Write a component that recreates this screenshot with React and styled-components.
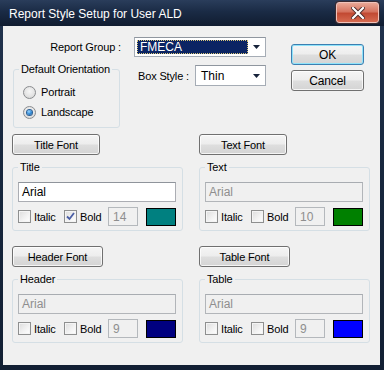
import React from 'react';
import styled, { createGlobalStyle } from 'styled-components';

const Global = createGlobalStyle`
  html, body { margin: 0; padding: 0; background: #ffffff; }
  body {
    width: 384px; height: 370px; overflow: hidden;
    font-family: "Liberation Sans", Arial, sans-serif;
    font-size: 11px; color: #000;
    letter-spacing: -0.15px;
  }
  * { box-sizing: border-box; }
`;

const Window = styled.div`
  width: 384px;
  height: 370px;
  display: flex;
  flex-direction: column;
  background: linear-gradient(180deg, #22344f 0%, #18283f 40%, #121f33 100%);
`;

const TitleBar = styled.div`
  height: 26px;
  flex: none;
  display: flex;
  align-items: flex-start;
  padding-left: 9px;
  background: linear-gradient(180deg, #2a3d5b 0%, #1a2b45 45%, #101c30 100%);
`;

const TitleText = styled.div`
  font-size: 12px;
  color: #ffffff;
  line-height: 14px;
  margin-top: 7px;
  letter-spacing: 0;
`;

const CloseButton = styled.div`
  margin-left: auto;
  margin-right: 5px;
  margin-top: 2px;
  width: 43px;
  height: 21px;
  border-radius: 3px;
  border: 1px solid #efc3bb;
  box-shadow: 0 0 0 1px #3b2a30;
  background: linear-gradient(180deg, #e9a796 0%, #d57460 45%, #c24a33 55%, #d66a50 100%);
  display: flex;
  align-items: center;
  justify-content: center;
`;

const Client = styled.div`
  flex: 1;
  margin: 0 4px 5px 3px;
  background: #f0f0f0;
  padding: 11px 0 0 9px;
  display: flex;
  flex-direction: column;
`;

const TopSection = styled.div`
  display: flex;
`;

const TopLeft = styled.div`
  width: 279px;
  display: flex;
  flex-direction: column;
`;

const FieldRow = styled.div`
  display: flex;
  align-items: center;
  height: 20px;
`;

const RightLabel = styled.div`
  width: ${p => p.$w}px;
  text-align: ${p => p.$align || 'left'};
  margin-left: ${p => p.$ml || 0}px;
  white-space: nowrap;
`;

const Select = styled.div`
  width: ${p => p.$w}px;
  height: ${p => p.$h || 20}px;
  margin-left: ${p => p.$ml || 0}px;
  border: 1px solid #a5acb5;
  border-top-color: #8f969f;
  background: #ffffff;
  display: flex;
  padding: 2px 1px 2px 2px;
`;

const SelectValue = styled.div`
  flex: 1;
  display: flex;
  align-items: center;
  padding-left: 2px;
  font-size: 12px;
  letter-spacing: 0;
  background: ${p => (p.$selected ? '#0b2463' : 'transparent')};
  color: ${p => (p.$selected ? '#ffffff' : '#000000')};
  border: 1px dotted ${p => (p.$selected ? '#d9c77a' : 'transparent')};
`;

const SelectArrow = styled.div`
  width: 16px;
  display: flex;
  align-items: center;
  justify-content: center;
`;

const SecondRow = styled.div`
  display: flex;
  margin-top: 6px;
`;

const BoxStyleRow = styled.div`
  display: flex;
  align-items: center;
  height: 21px;
  margin-top: 2px;
`;

const GroupBox = styled.fieldset`
  margin: 0 0 0 ${p => p.$ml || 0}px;
  width: ${p => p.$w}px;
  border: 1px solid #d5dfe5;
  border-radius: 3px;
  padding: 0 4px ${p => p.$pb || 4}px 5px;
  min-width: 0;
`;

const Legend = styled.legend`
  padding: 0 2px;
  font-size: 11px;
  line-height: 13px;
  white-space: nowrap;
`;

const RadioRow = styled.label`
  display: flex;
  align-items: center;
  height: 20px;
  margin-left: 4px;
  margin-top: ${p => p.$mt || 0}px;
  gap: 5px;
  font-size: 11px;
`;

const Radio = styled.span`
  width: 13px;
  height: 13px;
  border-radius: 50%;
  border: 1px solid #8a8c8f;
  background: radial-gradient(circle at 50% 40%, #f6f6f6 0%, #e4e4e4 55%, #cfcfcf 100%);
  display: flex;
  align-items: center;
  justify-content: center;
  &::after {
    content: '';
    width: 5px;
    height: 5px;
    border-radius: 50%;
    display: ${p => (p.$checked ? 'block' : 'none')};
    background: radial-gradient(circle at 40% 35%, #9fd8ff 0%, #2f8ad8 50%, #14508c 100%);
    box-shadow: 0 0 0 1px #2b5f95;
  }
`;

const ButtonColumn = styled.div`
  display: flex;
  flex-direction: column;
  gap: 5px;
  margin-top: 7px;
`;

const Button = styled.div`
  width: ${p => p.$w}px;
  height: 21px;
  border: 1px solid ${p => (p.$default ? '#3c7fb1' : '#707070')};
  border-radius: 3px;
  background: linear-gradient(180deg, #f5f5f5 0%, #ededed 48%, #dedede 52%, #d4d4d4 100%);
  box-shadow: inset 0 0 0 1px ${p => (p.$default ? '#8fe3fa' : 'rgba(255,255,255,0.75)')};
  display: flex;
  align-items: center;
  justify-content: center;
  font-size: ${p => p.$fs || 11}px;
  color: #000;
`;

const FontGrid = styled.div`
  display: grid;
  grid-template-columns: 171px 171px;
  column-gap: 16px;
  row-gap: 15px;
  margin-top: 6px;
`;

const FontBlock = styled.div`
  display: flex;
  flex-direction: column;
  align-items: flex-start;
`;

const FontGroup = styled(GroupBox)`
  margin-top: 6px;
  width: 171px;
  padding-right: 6px;
`;

const FontInput = styled.div`
  width: 158px;
  height: 20px;
  margin-top: 8px;
  border: 1px solid ${p => (p.$disabled ? '#b2b5b9' : '#abadb3')};
  border-top-color: ${p => (p.$disabled ? '#a8acb1' : '#8f949b')};
  background: ${p => (p.$disabled ? '#f0f0f0' : '#ffffff')};
  color: ${p => (p.$disabled ? '#8e8e8e' : '#000000')};
  font-size: 12px;
  letter-spacing: 0;
  display: flex;
  align-items: center;
  padding-left: 3px;
`;

const OptionRow = styled.div`
  display: flex;
  align-items: center;
  height: 19px;
  margin-top: 5px;
`;

const CheckItem = styled.label`
  width: ${p => p.$w}px;
  display: flex;
  align-items: center;
  gap: 3px;
  font-size: 11px;
`;

const CheckBox = styled.span`
  width: 13px;
  height: 13px;
  border: 1px solid #8e8f8f;
  background: linear-gradient(135deg, #dcdcdc 0%, #f3f3f3 60%, #ffffff 100%);
  box-shadow: inset 0 0 0 1px #f4f4f4;
  display: flex;
  align-items: center;
  justify-content: center;
`;

const SizeBox = styled.div`
  width: 30px;
  height: 19px;
  border: 1px solid #b4b8bc;
  background: #f0f0f0;
  color: #8e8e8e;
  font-size: 12px;
  letter-spacing: 0;
  display: flex;
  align-items: center;
  padding-left: 4px;
  margin-right: 8px;
`;

const Swatch = styled.div`
  width: 30px;
  height: 18px;
  border: 1px solid #000;
  background: ${p => p.$color};
`;

const Arrow = () => (
  <svg width="7" height="4" viewBox="0 0 7 4">
    <path d="M0 0 H7 L3.5 4 Z" fill="#16223a" />
  </svg>
);

const CheckMark = () => (
  <svg width="9" height="9" viewBox="0 0 9 9">
    <path d="M1 4.5 L3.5 7 L8 1" stroke="#4a5ea5" strokeWidth="1.8" fill="none" />
  </svg>
);

const CloseX = () => (
  <svg width="14" height="12" viewBox="0 0 14 12">
    <path d="M2 1 L12 11 M12 1 L2 11" stroke="#4a2a2a" strokeWidth="4" strokeLinecap="square" />
    <path d="M2 1 L12 11 M12 1 L2 11" stroke="#ffffff" strokeWidth="2.2" strokeLinecap="square" />
  </svg>
);

const fontSets = [
  { button: 'Title Font', bw: 88, legend: 'Title', disabled: false, bold: true, size: '14', color: '#008080' },
  { button: 'Text Font', bw: 88, legend: 'Text', disabled: true, bold: false, size: '10', color: '#008000' },
  { button: 'Header Font', bw: 91, legend: 'Header', disabled: true, bold: false, size: '9', color: '#000080' },
  { button: 'Table Font', bw: 91, legend: 'Table', disabled: true, bold: false, size: '9', color: '#0000ff' },
];

export default function App() {
  return (
    <>
      <Global />
      <Window>
        <TitleBar>
          <TitleText>Report Style Setup for User ALD</TitleText>
          <CloseButton><CloseX /></CloseButton>
        </TitleBar>
        <Client>
          <TopSection>
            <TopLeft>
              <FieldRow>
                <RightLabel $w={109} $align="right">Report Group :</RightLabel>
                <Select $w={132} $ml={13}>
                  <SelectValue $selected>FMECA</SelectValue>
                  <SelectArrow><Arrow /></SelectArrow>
                </Select>
              </FieldRow>
              <SecondRow>
                <GroupBox $w={107} $ml={1} $pb={5}>
                  <Legend>Default Orientation</Legend>
                  <RadioRow $mt={6}><Radio />Portrait</RadioRow>
                  <RadioRow><Radio $checked />Landscape</RadioRow>
                </GroupBox>
                <BoxStyleRow>
                  <RightLabel $w={57} $ml={18}>Box Style :</RightLabel>
                  <Select $w={71} $h={21}>
                    <SelectValue>Thin</SelectValue>
                    <SelectArrow><Arrow /></SelectArrow>
                  </Select>
                </BoxStyleRow>
              </SecondRow>
            </TopLeft>
            <ButtonColumn>
              <Button $w={73} $default $fs={12}>OK</Button>
              <Button $w={73} $fs={12}>Cancel</Button>
            </ButtonColumn>
          </TopSection>
          <FontGrid>
            {fontSets.map(f => (
              <FontBlock key={f.legend}>
                <Button $w={f.bw}>{f.button}</Button>
                <FontGroup>
                  <Legend>{f.legend}</Legend>
                  <FontInput $disabled={f.disabled}>Arial</FontInput>
                  <OptionRow>
                    <CheckItem $w={46}><CheckBox />Italic</CheckItem>
                    <CheckItem $w={44}><CheckBox>{f.bold && <CheckMark />}</CheckBox>Bold</CheckItem>
                    <SizeBox>{f.size}</SizeBox>
                    <Swatch $color={f.color} />
                  </OptionRow>
                </FontGroup>
              </FontBlock>
            ))}
          </FontGrid>
        </Client>
      </Window>
    </>
  );
}
